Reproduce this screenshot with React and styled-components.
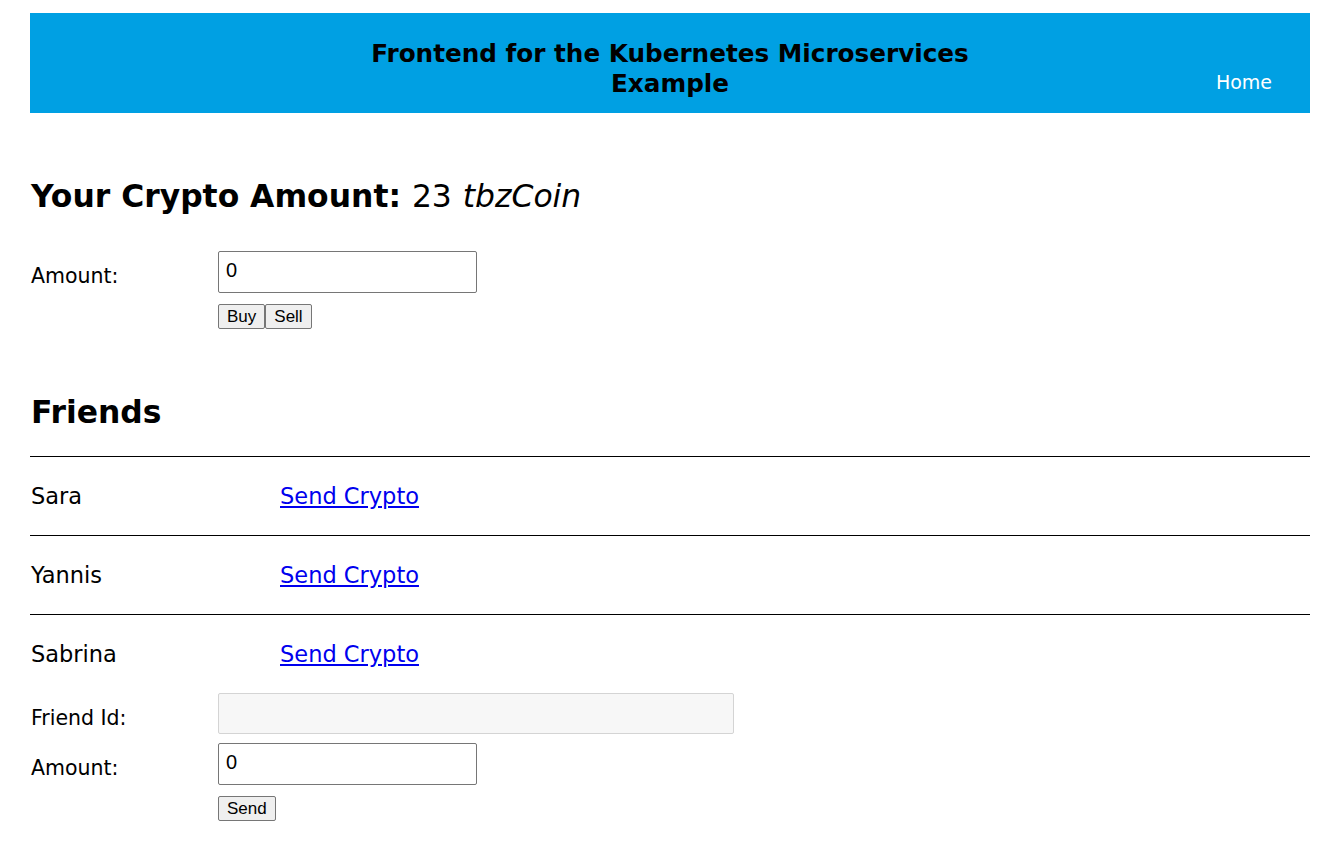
import styled, { createGlobalStyle } from "styled-components";

const GlobalStyle = createGlobalStyle`
  body {
    margin: 0;
    background: #fff;
    font-family: "DejaVu Sans", Verdana, sans-serif;
    color: #000;
  }
`;

const friends = [
  { id: 1, name: "Sara" },
  { id: 2, name: "Yannis" },
  { id: 3, name: "Sabrina" },
];

const App = () => {
  return (
    <>
      <GlobalStyle />
      <Page>
        <Header>
          <Spacer />
          <Title>Frontend for the Kubernetes Microservices Example</Title>
          <Nav>
            <NavLink href="#">Home</NavLink>
          </Nav>
        </Header>

        <Heading>
          Your Crypto Amount: <Value>23</Value> <Coin>tbzCoin</Coin>
        </Heading>

        <Form $top={36}>
          <FormRow>
            <Label>Amount:</Label>
            <Input defaultValue="0" />
          </FormRow>
          <ButtonRow>
            <Button>Buy</Button>
            <Button>Sell</Button>
          </ButtonRow>
        </Form>

        <Heading $top={64}>Friends</Heading>

        <FriendList>
          {friends.map((f) => (
            <FriendRow key={f.id}>
              <FriendName>{f.name}</FriendName>
              <SendLink href="#">Send Crypto</SendLink>
            </FriendRow>
          ))}
        </FriendList>

        <Form>
          <FormRow>
            <Label>Friend Id:</Label>
            <Input $wide disabled />
          </FormRow>
          <FormRow>
            <Label>Amount:</Label>
            <Input defaultValue="0" />
          </FormRow>
          <ButtonRow>
            <Button>Send</Button>
          </ButtonRow>
        </Form>
      </Page>
    </>
  );
};

export default App;

const Page = styled.div`
  padding: 13px 26px 20px 30px;
`;

const Header = styled.header`
  height: 100px;
  padding: 0 38px;
  background-color: #00a0e3;
  display: flex;
  align-items: center;
`;

const Spacer = styled.div`
  flex: 1;
`;

const Title = styled.h1`
  width: 680px;
  margin: 12px 0 0;
  text-align: center;
  font-size: 24.7px;
  line-height: 30px;
  font-weight: bold;
`;

const Nav = styled.nav`
  flex: 1;
  display: flex;
  justify-content: flex-end;
  padding-top: 38px;
`;

const NavLink = styled.a`
  color: #fff;
  text-decoration: none;
  font-size: 19px;
`;

const Heading = styled.h2`
  margin: ${(p) => p.$top || 64}px 0 0 1px;
  font-size: 31.4px;
  line-height: 38px;
  font-weight: bold;
`;

const Value = styled.span`
  font-weight: normal;
`;

const Coin = styled.em`
  font-weight: normal;
`;

const Form = styled.div`
  margin-top: ${(p) => p.$top || 0}px;
  display: flex;
  flex-direction: column;
  gap: 9px;
`;

const FormRow = styled.div`
  display: flex;
  align-items: center;
`;

const Label = styled.label`
  box-sizing: border-box;
  width: 188px;
  padding: 8px 0 0 1px;
  font-size: 20.5px;
`;

const Input = styled.input`
  box-sizing: border-box;
  width: ${(p) => (p.$wide ? 516 : 259)}px;
  height: ${(p) => (p.$wide ? 41 : 42)}px;
  margin: 0;
  padding: 0 7px 3px;
  font-family: "Liberation Sans", Arial, sans-serif;
  font-size: 20px;
  border: 1px solid ${(p) => (p.$wide ? "#d4d4d4" : "#767676")};
  border-radius: 2px;
  background: ${(p) => (p.$wide ? "#f7f7f7" : "#fff")};
`;

const ButtonRow = styled.div`
  display: flex;
  padding-left: 188px;
  margin-top: 2px;
`;

const Button = styled.button`
  font-family: "Liberation Sans", Arial, sans-serif;
  font-size: 17px;
  height: 25px;
  padding: 0 8px;
  margin: 0;
  background: #efefef;
  color: #000;
  border: 1px solid #767676;
  border-radius: 2px;
`;

const FriendList = styled.div`
  margin-top: 25px;
`;

const FriendRow = styled.div`
  display: flex;
  align-items: center;
  height: 78px;
  border-top: 1px solid #000;
  padding-left: 1px;
`;

const FriendName = styled.span`
  width: 249px;
  font-size: 22.5px;
`;

const SendLink = styled.a`
  color: #0000ee;
  font-size: 22.5px;
  text-decoration: underline;
`;
